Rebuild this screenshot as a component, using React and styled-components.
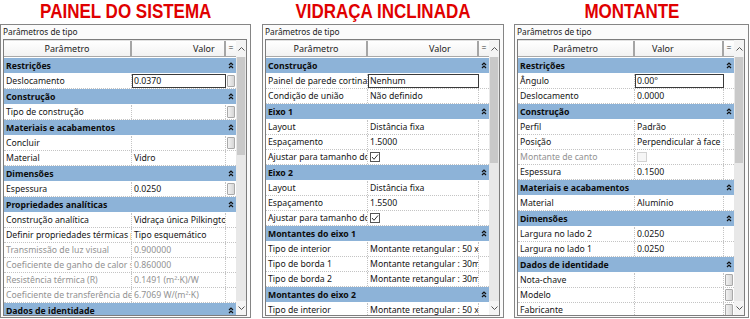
import React from 'react';
import styled, { createGlobalStyle } from 'styled-components';

const GlobalStyle = createGlobalStyle`
  html, body {
    margin: 0;
    padding: 0;
    background: #fff;
  }
  body {
    font-family: 'Noto Sans', 'Open Sans', sans-serif;
  }
`;

const Page = styled.div`
  display: flex;
  width: 750px;
  height: 319px;
  overflow: hidden;
`;

const Column = styled.section`
  flex: 0 0 ${(p) => p.$w}px;
  width: ${(p) => p.$w}px;
  min-width: 0;
  margin-left: ${(p) => p.$gap}px;
  display: flex;
  flex-direction: column;
`;

const Title = styled.h1`
  margin: 0;
  height: 24px;
  line-height: 19px;
  text-align: center;
  white-space: nowrap;
  font: bold 20px 'Liberation Sans', Arial, sans-serif;
  color: #e00000;

  span {
    display: inline-block;
    transform: scaleX(0.85);
  }
`;

const Panel = styled.div`
  box-sizing: border-box;
  height: 294px;
  min-width: 0;
  border: 1px solid #858585;
  background: #fbfbfb;
  display: flex;
  flex-direction: column;
`;

const Caption = styled.div`
  height: 14px;
  line-height: 13px;
  padding-left: 2px;
  font-size: 8.3px;
  color: #222;
`;

const Grid = styled.div`
  flex: 1;
  margin: 0 3px 1px 2px;
  border: 1px solid #7d7d7d;
  background: #fff;
  display: flex;
  overflow: hidden;
  min-height: 0;
  min-width: 0;
`;

const Table = styled.div`
  flex: 1;
  min-width: 0;
  overflow: hidden;
  display: flex;
  flex-direction: column;
  font-size: 8.7px;
`;

const Header = styled.div`
  display: flex;
  height: 17px;
  flex: 0 0 17px;
  box-sizing: border-box;
  border-top: 1px solid #e2e2e2;
  border-bottom: 1px solid #a8a8a8;
  margin-bottom: 1px;
  background: linear-gradient(#ffffff, #f2f2f2);
`;

const HeadCell = styled.div`
  box-sizing: border-box;
  ${(p) => (p.$w ? `flex: 0 0 ${p.$w}px;` : 'flex: 1;')}
  min-width: 0;
  border-right: 2px solid #a5a5a5;
  line-height: 15px;
  font-size: 9px;
  text-align: ${(p) => p.$align || 'center'};
  padding-left: ${(p) => p.$pad || 0}px;
  color: #222;
  white-space: nowrap;
  overflow: hidden;
`;

const EqHead = styled.div`
  flex: 0 0 10px;
  line-height: 15px;
  text-align: center;
  color: #333;
`;

const Row = styled.div`
  display: flex;
  height: 15px;
  flex: 0 0 15px;
  box-sizing: border-box;
  border-bottom: 1px dotted #c4c4c4;
  line-height: 14px;
`;

const Cell = styled.div`
  box-sizing: border-box;
  ${(p) => (p.$w ? `flex: 0 0 ${p.$w}px;` : 'flex: 1;')}
  min-width: 0;
  padding-left: 2px;
  border-right: 1px dotted #c4c4c4;
  white-space: nowrap;
  overflow: hidden;
  color: ${(p) => (p.$dim ? '#929292' : '#151515')};
  display: flex;
  align-items: center;
`;

const EditCell = styled(Cell)`
  border: 1px solid #3a3a3a;
  padding-left: 1px;
`;

const EqCell = styled.div`
  flex: 0 0 10px;
  display: flex;
  align-items: center;
  justify-content: center;
`;

const MiniButton = styled.div`
  width: 6px;
  height: 10px;
  background: linear-gradient(90deg, #f2f2f2, #d6d6d6);
  border: 1px solid #a9a9a9;
  border-radius: 1px;
`;

const GroupRow = styled.div`
  display: flex;
  align-items: center;
  height: 16px;
  flex: 0 0 16px;
  box-sizing: border-box;
  border-bottom: 1px solid #fff;
  background: #8db3d8;
  font-weight: bold;
  color: #0c0c0c;
  padding-left: 2px;
`;

const GroupLabel = styled.span`
  flex: 1;
  white-space: nowrap;
`;

const Collapse = styled.span`
  flex: 0 0 10px;
  display: flex;
  justify-content: center;
`;

const Check = styled.span`
  box-sizing: border-box;
  width: 10px;
  height: 10px;
  border: 1px solid ${(p) => (p.$off ? '#d2d2d2' : '#555')};
  background: ${(p) => (p.$off ? '#f6f6f6' : '#fff')};
  display: flex;
  align-items: center;
  justify-content: center;
`;

const Scroll = styled.div`
  flex: 0 0 10px;
  display: flex;
  flex-direction: column;
  background: #e8e8e8;
`;

const ScrollArrow = styled.div`
  flex: 0 0 ${(p) => p.$h}px;
  display: flex;
  align-items: center;
  justify-content: center;
  background: #f4f4f4;
`;

const Thumb = styled.div`
  flex: 0 0 ${(p) => p.$h}px;
  margin: 0 1px;
  background: #c9c9c9;
`;

const Spacer = styled.div`
  flex: 1;
`;

const Chevron = ({ up }) => (
  <svg width="7" height="4" viewBox="0 0 7 4">
    <path
      d={up ? 'M0.5 3.5 L3.5 0.5 L6.5 3.5' : 'M0.5 0.5 L3.5 3.5 L6.5 0.5'}
      fill="none"
      stroke="#555"
      strokeWidth="1"
    />
  </svg>
);

const CollapseIcon = () => (
  <svg width="6" height="7" viewBox="0 0 6 7">
    <path d="M1 3 L3 1 L5 3 M1 6 L3 4 L5 6" fill="none" stroke="#111" strokeWidth="1.2" />
  </svg>
);

const Tick = () => (
  <svg width="8" height="8" viewBox="0 0 8 8">
    <path d="M1 4 L3 6.3 L7 1.5" fill="none" stroke="#333" strokeWidth="1" />
  </svg>
);

const g = (label) => ({ group: label });

const panels = [
  {
    title: 'PAINEL DO SISTEMA',
    width: 251,
    gap: 0,
    param: 128,
    valorPad: 61,
    thumb: 98,
    rows: [
      g('Restrições'),
      { p: 'Deslocamento', v: '0.0370', edit: true, btn: true },
      g('Construção'),
      { p: 'Tipo de construção', btn: true },
      g('Materiais e acabamentos'),
      { p: 'Concluir', btn: true },
      { p: 'Material', v: 'Vidro' },
      g('Dimensões'),
      { p: 'Espessura', v: '0.0250', btn: true },
      g('Propriedades analíticas'),
      { p: 'Construção analítica', v: 'Vidraça única Pilkington' },
      { p: 'Definir propriedades térmicas por', v: 'Tipo esquemático' },
      { p: 'Transmissão de luz visual', v: '0.900000', dim: true },
      { p: 'Coeficiente de ganho de calor solar', v: '0.860000', dim: true },
      { p: 'Resistência térmica (R)', v: '0.1491 (m²·K)/W', dim: true },
      { p: 'Coeficiente de transferência de calor', v: '6.7069 W/(m²·K)', dim: true },
      g('Dados de identidade'),
    ],
  },
  {
    title: 'VIDRAÇA INCLINADA',
    width: 242,
    gap: 11,
    param: 102,
    valorPad: 61,
    thumb: 106,
    rows: [
      g('Construção'),
      { p: 'Painel de parede cortina', v: 'Nenhum', edit: true },
      { p: 'Condição de união', v: 'Não definido' },
      g('Eixo 1'),
      { p: 'Layout', v: 'Distância fixa' },
      { p: 'Espaçamento', v: '1.5000' },
      { p: 'Ajustar para tamanho do montante', check: true },
      g('Eixo 2'),
      { p: 'Layout', v: 'Distância fixa' },
      { p: 'Espaçamento', v: '1.5500' },
      { p: 'Ajustar para tamanho do montante', check: true },
      g('Montantes do eixo 1'),
      { p: 'Tipo de interior', v: 'Montante retangular : 50 x 150mm' },
      { p: 'Tipo de borda 1', v: 'Montante retangular : 30mm quadrado' },
      { p: 'Tipo de borda 2', v: 'Montante retangular : 30mm quadrado' },
      g('Montantes do eixo 2'),
      { p: 'Tipo de interior', v: 'Montante retangular : 50 x 150mm' },
    ],
  },
  {
    title: 'MONTANTE',
    width: 235,
    gap: 10,
    param: 117,
    valorPad: 17,
    thumb: 106,
    rows: [
      g('Restrições'),
      { p: 'Ângulo', v: '0.00°', edit: true },
      { p: 'Deslocamento', v: '0.0000' },
      g('Construção'),
      { p: 'Perfil', v: 'Padrão' },
      { p: 'Posição', v: 'Perpendicular à face' },
      { p: 'Montante de canto', dim: true, check: 'off' },
      { p: 'Espessura', v: '0.1500' },
      g('Materiais e acabamentos'),
      { p: 'Material', v: 'Alumínio' },
      g('Dimensões'),
      { p: 'Largura no lado 2', v: '0.0250' },
      { p: 'Largura no lado 1', v: '0.0250' },
      g('Dados de identidade'),
      { p: 'Nota-chave', btn: true },
      { p: 'Modelo', btn: true },
      { p: 'Fabricante', btn: true },
    ],
  },
];

const PropRow = ({ row, param }) => {
  const Value = row.edit ? EditCell : Cell;
  return (
    <Row>
      <Cell $w={param} $dim={row.dim}>{row.p}</Cell>
      <Value $dim={row.dim}>
        {row.check ? (
          <Check $off={row.check === 'off'}>{row.check === 'off' ? null : <Tick />}</Check>
        ) : (
          row.v
        )}
      </Value>
      <EqCell>{row.btn ? <MiniButton /> : null}</EqCell>
    </Row>
  );
};

const TypeProperties = ({ panel }) => (
  <Column $w={panel.width} $gap={panel.gap}>
    <Title>
      <span>{panel.title}</span>
    </Title>
    <Panel>
      <Caption>Parâmetros de tipo</Caption>
      <Grid>
        <Table>
          <Header>
            <HeadCell $w={panel.param}>Parâmetro</HeadCell>
            <HeadCell $align="left" $pad={panel.valorPad}>
              Valor
            </HeadCell>
            <EqHead>=</EqHead>
          </Header>
          {panel.rows.map((row, i) =>
            row.group ? (
              <GroupRow key={i}>
                <GroupLabel>{row.group}</GroupLabel>
                <Collapse>
                  <CollapseIcon />
                </Collapse>
              </GroupRow>
            ) : (
              <PropRow key={i} row={row} param={panel.param} />
            )
          )}
        </Table>
        <Scroll>
          <ScrollArrow $h={17}>
            <Chevron up />
          </ScrollArrow>
          <Thumb $h={panel.thumb} />
          <Spacer />
          <ScrollArrow $h={14}>
            <Chevron />
          </ScrollArrow>
        </Scroll>
      </Grid>
    </Panel>
  </Column>
);

export default function App() {
  return (
    <>
      <GlobalStyle />
      <Page>
        {panels.map((panel) => (
          <TypeProperties key={panel.title} panel={panel} />
        ))}
      </Page>
    </>
  );
}
